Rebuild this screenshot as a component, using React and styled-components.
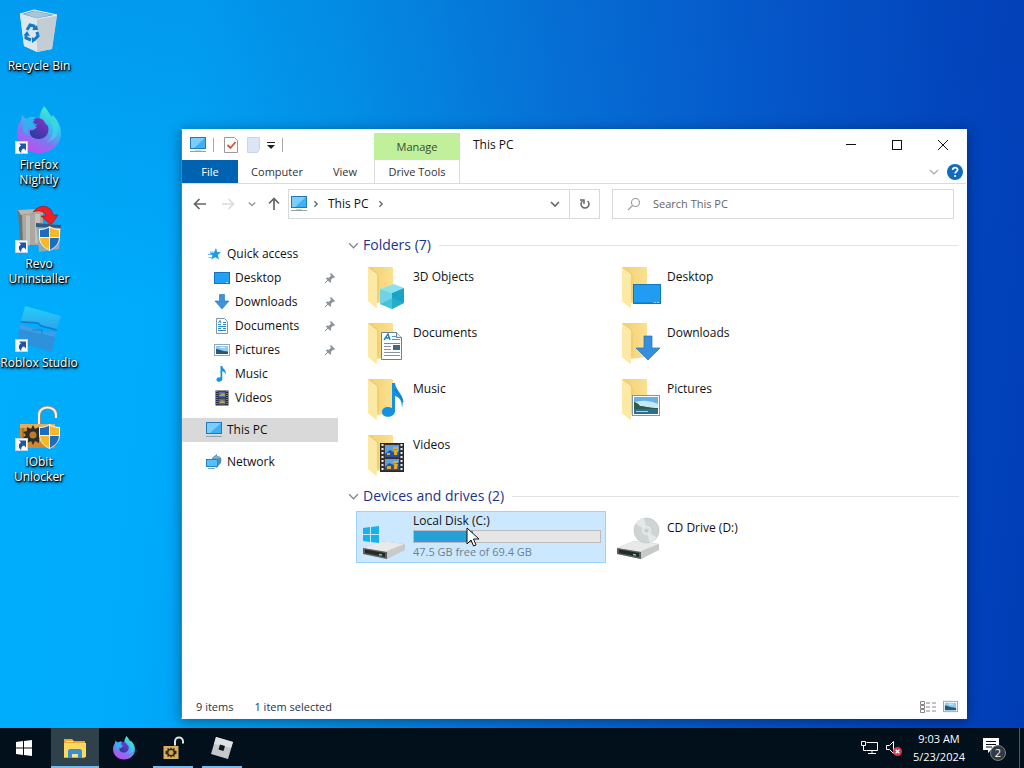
// Third party libraries
import React from 'react';
import styled, { createGlobalStyle } from 'styled-components';

const GlobalStyle = createGlobalStyle`
  * {
    box-sizing: border-box;
  }

  body {
    margin: 0;
    font-family: 'Open Sans', 'Noto Sans', sans-serif;
    font-size: 12px;
    line-height: 16px;
    color: #111;
  }

  button,
  input {
    margin: 0;
    padding: 0;
    border: 0;
    background: none;
    color: inherit;
    font: inherit;
  }

  a {
    color: inherit;
    text-decoration: none;
  }

  svg {
    display: block;
    flex: none;
  }
`;

// Desktop

const Screen = styled.div`
  display: flex;
  flex-direction: column;
  height: 100vh;
  min-height: 680px;
  overflow: hidden;
  background:
    linear-gradient(180deg, rgba(10, 60, 170, 0.16) 0%, rgba(10, 60, 170, 0) 40%),
    linear-gradient(96deg, #00aefd 0%, #00abfb 18%, #0298ec 32%, #0676db 51%, #0458cc 72%, #0143bc 90%, #003db5 100%);
`;

const Desktop = styled.main`
  position: relative;
  flex: 1;
`;

const ShortcutList = styled.div`
  display: grid;
  grid-auto-rows: 99px;
  width: 78px;
  padding-top: 7px;
`;

const Shortcut = styled.a`
  display: flex;
  flex-direction: column;
  align-items: center;
  gap: 3px;
  color: #fff;
  line-height: 15px;
  text-align: center;
  text-shadow: 1px 1px 1px #000, 0 1px 2px #000, 1px 2px 3px rgba(0, 0, 0, 0.7);
`;

const ShortcutLabel = styled.span`
  width: ${props => props.$narrow ? '62px' : 'auto'};
  white-space: ${props => props.$narrow ? 'normal' : 'nowrap'};
`;

// Explorer window

const Window = styled.section`
  position: absolute;
  inset: 129px 57px 9px 181px;
  display: flex;
  flex-direction: column;
  border: 1px solid;
  border-color: #f4faff #f4faff #f4faff #1e8fd4;
  background: #fff;
  box-shadow: 0 2px 12px rgba(0, 0, 0, 0.4);
`;

const TitleBar = styled.header`
  display: flex;
  height: 30px;
`;

const QuickTools = styled.div`
  display: flex;
  align-items: center;
  width: 192px;
  padding-left: 8px;
  gap: 6px;
`;

const Separator = styled.span`
  width: 1px;
  height: 14px;
  margin: 0 3px 0 1px;
  background: #aaa;
`;

const ToolButton = styled.button`
  display: grid;
  place-items: center;
  width: ${props => props.$width || 16}px;
  height: 24px;
`;

const ManageTab = styled.span`
  width: 86px;
  margin-top: 3px;
  background: #c0f09a;
  font-size: 11px;
  line-height: 28px;
  text-align: center;
  color: #3c4a33;
`;

const WindowTitle = styled.h1`
  flex: 1;
  margin: 0;
  padding-left: 13px;
  font-size: 12px;
  font-weight: 400;
  line-height: 30px;
`;

const CaptionButton = styled.button`
  display: grid;
  place-items: center;
  width: 46px;
`;

const Ribbon = styled.nav`
  display: flex;
  height: 24px;
  border-bottom: 1px solid #dadbdc;
  font-size: 11px;
`;

const RibbonTab = styled.button`
  width: ${props => props.$width}px;
  color: #333;
  line-height: 23px;
`;

const FileTab = styled(RibbonTab)`
  background: #0063b1;
  color: #fff;
`;

const ContextTab = styled(RibbonTab)`
  border: 1px solid #dedede;
  border-width: 0 1px;
`;

const RibbonEnd = styled.div`
  display: flex;
  align-items: center;
  gap: 8px;
  margin-left: auto;
  padding-right: 3px;
`;

const AddressRow = styled.div`
  display: flex;
  align-items: center;
  gap: 4px;
  height: 41px;
  padding: 0 12px 2px 6px;
`;

const AddressBox = styled.div`
  display: flex;
  align-items: center;
  flex: 312 1 312px;
  height: 30px;
  margin-right: 8px;
  border: 1px solid #d9d9d9;
`;

const Crumb = styled.button`
  display: flex;
  align-items: center;
  gap: ${props => props.$root ? '5px' : '8px'};
  padding: 0 ${props => props.$root ? '2px' : '6px'};
`;

const RefreshButton = styled.button`
  display: grid;
  place-items: center;
  width: 30px;
  height: 28px;
  border-left: 1px solid #d9d9d9;
`;

const HistoryButton = styled(ToolButton)`
  margin-left: auto;
  margin-right: 6px;
`;

const SearchBox = styled.label`
  display: flex;
  align-items: center;
  gap: 12px;
  flex: 342 1 342px;
  height: 30px;
  padding: 0 14px;
  border: 1px solid #d9d9d9;
  font-size: 11px;
`;

const SearchInput = styled.input`
  flex: 1;
  min-width: 0;
  outline: none;

  &::placeholder {
    color: #666;
    opacity: 1;
  }
`;

const Body = styled.div`
  display: flex;
  flex: 1;
  min-height: 0;
`;

const Sidebar = styled.nav`
  width: 156px;
  padding-top: 17px;
`;

const SideGroup = styled.div`
  margin-bottom: 8px;
`;

const SideLink = styled.a`
  display: flex;
  align-items: center;
  gap: 5px;
  height: 24px;
  padding-left: ${props => props.$nested ? '32px' : '24px'};
  background: ${props => props.$selected ? '#d9d9d9' : 'none'};
`;

const PinSlot = styled.span`
  margin-left: auto;
  padding-right: 2px;
`;

const Content = styled.div`
  flex: 1;
  padding: 9px 7px 0 10px;
`;

const SectionHeader = styled.h2`
  display: flex;
  align-items: center;
  gap: 4px;
  height: 22px;
  margin: 0 0 4px;
  color: #1e3287;
  font-size: 14px;
  font-weight: 400;
  line-height: 22px;

  &::after {
    content: '';
    flex: 1;
    height: 1px;
    margin-left: 4px;
    background: #e2e2e2;
  }
`;

const TileGrid = styled.div`
  display: grid;
  grid-template-columns: repeat(auto-fill, 250px);
  gap: 4px;
  margin: 0 -7px 5px 8px;
`;

const Tile = styled.a`
  display: flex;
  gap: 3px;
  height: 52px;
  padding: 1px 4px 1px 5px;
  border: 1px solid ${props => props.$selected ? '#99d1ff' : 'transparent'};
  background: ${props => props.$selected ? '#cce8ff' : 'none'};
`;

const TileLabel = styled.span`
  padding-top: 7px;
`;

const DriveInfo = styled.span`
  display: flex;
  flex-direction: column;
  flex: 1;
  gap: 1px;
`;

const Meter = styled.span`
  height: 13px;
  border: 1px solid #bcbcbc;
  background: #e6e6e6;
`;

const MeterFill = styled.span`
  display: block;
  height: 11px;
  background: #26a0da;
`;

const FreeSpace = styled.span`
  color: #6d7f8c;
  font-size: 11px;
`;

const StatusBar = styled.footer`
  display: flex;
  align-items: center;
  gap: 21px;
  height: 23px;
  padding: 0 8px 0 14px;
  color: #26334d;
  font-size: 11px;
`;

const ViewModes = styled.div`
  display: flex;
  gap: 6px;
  margin-left: auto;
`;

const Pointer = styled.svg`
  position: absolute;
  left: 466px;
  top: 527px;
`;

// Taskbar

const Taskbar = styled.footer`
  display: flex;
  height: 40px;
  background: #01101a;
  color: #fff;
`;

const TaskButton = styled.button`
  display: grid;
  place-items: center;
  width: 48px;
  margin-right: ${props => props.$start ? '3px' : '1px'};
  background: ${props => props.$active ? '#2f414b' : 'none'};
  box-shadow: ${props => props.$active ? 'inset 0 -2px #76b9ed' : 'none'};
`;

const RunningButton = styled(TaskButton)`
  background: linear-gradient(#76b9ed, #76b9ed) center bottom / 40px 2px no-repeat;
`;

const Tray = styled.div`
  display: flex;
  align-items: center;
  gap: 7px;
  margin-left: auto;
`;

const Clock = styled.time`
  width: 60px;
  font-size: 11px;
  line-height: 18px;
  text-align: center;
  white-space: nowrap;
`;

const NoticeButton = styled.button`
  width: 26px;
  margin-left: 6px;
`;

const ShowDesktop = styled.button`
  width: 5px;
  height: 40px;
  margin-left: 4px;
  border-left: 1px solid #4c5a63;
`;

// Small icons

const MonitorIcon = () => (
  <svg width="16" height="16" viewBox="0 0 16 16">
    <rect x="0.5" y="0.5" width="15" height="11" fill="#3fb0f5" stroke="#2378b8" />
    <path d="M1 1h14L4 11H1z" fill="#7bcdfa" />
    <path d="M0 14.500h16" stroke="#8fa3b1" />
    <path d="M5 13h6v1H5z" fill="#c3d3de" />
  </svg>
);

const StarIcon = () => (
  <svg width="16" height="16" viewBox="0 0 16 16">
    <path d="M10 2l1.200 4 3.800.300-3.200 2.600 1.200 4.600-3.800-2.300-4 2.300 1.300-4.300L3.500 6.800l4.400-.4z" fill="#1f9be8" />
    <path d="M2 8.500h4M2.500 11.500h3M4 6h3" stroke="#64bdf2" />
  </svg>
);

const DesktopIcon = () => (
  <svg width="16" height="16" viewBox="0 0 16 16">
    <rect x="0.5" y="2.500" width="15" height="11" fill="#22a0f5" stroke="#1474c4" />
    <path d="M12 12.500h2" stroke="#a7dcff" />
  </svg>
);

const DownloadIcon = () => (
  <svg width="16" height="16" viewBox="0 0 16 16">
    <path d="M5.500.5h5V7h4.500L8 15 1 7h4.500z" fill="#3c93dc" stroke="#2470b4" strokeWidth="0.6" />
  </svg>
);

const DocumentIcon = () => (
  <svg width="16" height="16" viewBox="0 0 16 16">
    <path d="M2.500.5h8l3 3v12h-11z" fill="#fff" stroke="#8395a3" />
    <path d="M4 6.500h3M9 4.500h3M9 6.500h3M4 8.500h8M4 10.500h3M9 10.500h3M4 12.500h8" stroke="#2e8ccc" />
    <path d="M4.500 5l1.500-2.500L7 5" fill="none" stroke="#2b87c7" />
  </svg>
);

const PictureIcon = ({ size = 16 }) => (
  <svg width={size} height={size} viewBox="0 0 16 16">
    <rect x="0.5" y="2.500" width="15" height="11" fill="#fff" stroke="#9aa6b0" />
    <rect x="2" y="4" width="12" height="8" fill="#8ccdf3" />
    <path d="M2 7c3 0 5 2 12 2.500V12H2z" fill="#27577c" />
    <path d="M6 5.500h5" stroke="#e4f5ff" />
  </svg>
);

const MusicIcon = () => (
  <svg width="16" height="16" viewBox="0 0 16 16">
    <path d="M6.500 0h1.800c.2 3 4.700 3.800 3.200 8.500-.3-2-1.500-3-3.200-3.300V13c0 3.400-5.800 3.700-5.800.7 0-2 2.300-2.800 4-2.200z" fill="#1592e2" />
  </svg>
);

const VideoIcon = () => (
  <svg width="16" height="16" viewBox="0 0 16 16">
    <rect x="1.500" y="0.500" width="13" height="15" fill="#272833" />
    <path d="M3 1v14M13 1v14" stroke="#c4c8cc" strokeDasharray="1 1" />
    <path d="M4.500 1.500h7v6h-7zM4.500 8.500h7v6h-7z" fill="#4b6ea8" />
    <path d="M5 6l3-3 3 1v2zM5 13l3-3 3 2v1z" fill="#c4a03c" />
  </svg>
);

const NetworkIcon = () => (
  <svg width="16" height="16" viewBox="0 0 16 16">
    <path d="M6 4l5-4v2c4 0 5 2 4 7l-5 5z" fill="#4c8fb8" />
    <path d="M8 4c3-2 5-1 6 0M10 13c2-2 2-5 1-9" stroke="#a6d5e8" fill="none" />
    <rect x="0.500" y="5.500" width="11" height="7" fill="#55bff7" stroke="#2784bd" />
    <path d="M2 14.500h7" stroke="#7aa8c4" />
  </svg>
);

const PinIcon = () => (
  <svg width="12" height="12" viewBox="0 0 12 12">
    <path d="M7 1l4 4-1 1-1-.3-2 2 .2 2.100-1 1L1.900 6.500l1-1 2.100.3 2-2L6 2z" fill="#8b949b" />
    <path d="M4 8l-3 3" stroke="#8b949b" />
  </svg>
);

const Chevron = ({ size = 10, color = '#666', right, width = 1.2 }) => (
  <svg width={size} height={size} viewBox="0 0 10 10" fill="none" stroke={color} strokeWidth={width}>
    <path d={right ? 'M3 1.500L6.500 5 3 8.500' : 'M1 3l4 4 4-4'} />
  </svg>
);

const ArrowIcon = ({ turn = 0, color = '#666' }) => (
  <svg width="14" height="14" viewBox="0 0 14 14" fill="none" stroke={color} strokeWidth="1.700">
    <path d="M13 7H1.500M6.500 2l-5 5 5 5" transform={`rotate(${turn} 7 7)`} />
  </svg>
);

// Folder and drive icons

const Folder = ({ children }) => (
  <svg width="48" height="48" viewBox="0 0 48 48">
    <defs>
      <linearGradient id="folder-back" x1="0" y1="0" x2="1" y2="0">
        <stop offset="0" stopColor="#f3cf70" />
        <stop offset="1" stopColor="#fbe08f" />
      </linearGradient>
    </defs>
    <path d="M6 5h24c1 0 1 1 1 1v33l-17 2z" fill="url(#folder-back)" />
    <path d="M6 5l8 6c1 1 1 2 1 3v31c0 1-1 1-2 0l-7-6z" fill="#fce9a6" />
    <path d="M7 5.500l8 6c1 1 1 2 1 3V38" stroke="#ecc765" fill="none" />
    {children}
  </svg>
);

const FolderCube = () => (
  <Folder>
    <path d="M18 27l14-5 10 4-12 5z" fill="#8be2ef" />
    <path d="M18 27l12 4v16l-12-5z" fill="#6fd5e6" />
    <path d="M30 31l12-5v15l-12 6z" fill="#1aa3c6" />
    <path d="M18 42l13-6 11 5-12 6z" fill="#2bb5d1" opacity="0.6" />
  </Folder>
);

const FolderDesktop = () => (
  <Folder>
    <rect x="17.500" y="22.500" width="27" height="19" fill="#209cf3" stroke="#1575bd" />
    <path d="M19 40.500h18" stroke="#1688da" />
    <path d="M38 40.500h5" stroke="#8dd0ff" strokeDasharray="2 1" />
  </Folder>
);

const FolderDocument = () => (
  <Folder>
    <path d="M19.500 14.500h15l5 5v22h-20z" fill="#fff" stroke="#6f7f8b" />
    <path d="M34.500 14.500v5h5" fill="#e6edf2" stroke="#6f7f8b" />
    <path d="M22 22l4-6 2 6M24 20h4" stroke="#2282bd" fill="none" strokeWidth="1.400" />
    <path d="M30 18.500h4M30 21.500h8M22 25.500h16" stroke="#3e9dca" />
    <path d="M22 28.500h7M22 31.500h7M22 34.500h16M22 37.500h16" stroke="#8594a0" />
    <path d="M31 27h7v5h-7z" fill="#4a6478" />
  </Folder>
);

const FolderDownload = () => (
  <Folder>
    <path d="M28 18h8v12h8L32 42 20 30h8z" fill="#3490dc" stroke="#2573b5" strokeWidth="0.700" />
  </Folder>
);

const FolderMusic = () => (
  <Folder>
    <path d="M30 9h3c1 9 11 11 7 25 0-8-3-11-7-12v15c0 7-13 8-13 1 0-5 6-6 10-4z" fill="#1292e1" />
    <path d="M33 15c1 5 8 8 8 13" stroke="#0a6fb7" fill="none" />
  </Folder>
);

const FolderPicture = () => (
  <Folder>
    <rect x="16.500" y="21.500" width="27" height="20" fill="#fff" stroke="#8894a0" />
    <rect x="18" y="23" width="24" height="17" fill="#65b1e8" />
    <path d="M18 29c5-3 15-3 24 1v4H18z" fill="#c8e8f8" />
    <path d="M18 28c3 1 4 1 6 4 5 0 9 2 18 2v1H18z" fill="#315f46" />
    <path d="M18 35h24v5H18z" fill="#2a6d9c" />
    <path d="M20 37.500h12" stroke="#a7d2e8" />
  </Folder>
);

const FolderVideo = () => (
  <Folder>
    <rect x="18.500" y="13.500" width="23" height="28" fill="#3a3230" stroke="#2c2626" />
    <path d="M20.500 14v27M39.500 14v27" stroke="#eceff1" strokeWidth="2" strokeDasharray="2 2" />
    <path d="M23 15h14v12H23zM23 29h14v11H23z" fill="#5f9fdd" />
    <path d="M23 24l5-4 5 3 4-2v6H23zM23 37l4-4 5 2 5-3v8H23z" fill="#2553a0" />
    <path d="M31 17h5v2h-5zM32 20h4l-1 5h-3zM31 31h5v2h-5zM32 34h4l-1 5h-3zM25 36h4v3h-4zM25 23h3v2h-3z" fill="#e3aa26" />
  </Folder>
);

const DriveBody = () => (
  <g>
    <path d="M1 35l17-7 25 3v5l-18 10L1 41z" fill="#b6b9bb" />
    <path d="M1 35l17-7 25 3-18 8z" fill="#e9e9e8" />
    <path d="M25 38l18-7v6l-18 9z" fill="#c8caca" />
    <path d="M1 35l24 4v7L1 41z" fill="#5c5f5f" />
    <path d="M3 36.500l20 3.500v4L3 40z" fill="#242828" />
    <path d="M17 41.500l3 .5" stroke="#75d68a" strokeWidth="1.500" />
  </g>
);

const LocalDiskIcon = () => (
  <svg width="48" height="48" viewBox="0 0 48 48">
    <DriveBody />
    <path d="M1 15l7-1v7H1zM9 14l8-1v8H9zM1 22h7v7l-7-1zM9 22h8v8l-8-1z" fill="#17b1ee" />
  </svg>
);

const CdDriveIcon = () => (
  <svg width="48" height="48" viewBox="0 0 48 48">
    <DriveBody />
    <circle cx="30.500" cy="17.500" r="12.500" fill="#cfd5d5" stroke="#bcc4c4" strokeWidth="0.700" />
    <path d="M30.500 17.500L20 11a12 12 0 0 1 8-6zM30.500 17.500l10 7a12 12 0 0 1-7 5z" fill="#e3e9e8" />
    <circle cx="30.500" cy="17.500" r="4" fill="#d9dede" stroke="#eef1f1" />
    <circle cx="30.500" cy="17.500" r="1.500" fill="#c1c8c8" />
  </svg>
);

// Desktop and taskbar app icons

const ShortcutArrow = () => (
  <g>
    <rect x="0.500" y="35.500" width="12" height="12" fill="#fff" stroke="#c7d6e4" />
    <path d="M4 37.500h7v7l-2-2c-2 .5-3 2-2.800 4.500-3-2-3.200-6-.2-7.500z" fill="#1d56a4" />
  </g>
);

const Shield = () => (
  <g>
    <path d="M24 24c5 0 8-1 10.500-3 3 2 6 3 10.500 3v8c0 7-5 11-10.500 14C29 43 24 39 24 32z" fill="#f5f5f0" />
    <path d="M25 25c4 0 6.500-1 9-2.500V32h-9zM35 33h9c-.5 6-4 9-9 12z" fill="#1b6cc2" />
    <path d="M35 22.500c3 1.500 5 2.500 9 2.500v7h-9zM25 33h9v12c-5-3-8.500-6-9-12z" fill="#f7b92b" />
  </g>
);

const RecycleBinIcon = () => (
  <svg width="48" height="48" viewBox="0 0 48 48">
    <path d="M5 7l12 5 25-4-5 34-15 3-13-6z" fill="#cbd9e3" />
    <path d="M5 7l17 5v33L9 39z" fill="#dce7ee" />
    <path d="M22 12l20-4-5 34-15 3z" fill="#c3cdd4" />
    <path d="M5 7l14-4 23 5-20 4z" fill="#81a6bf" stroke="#e7f0f5" />
    <path d="M10 7l10-3 15 4-13 3z" fill="#a9c6d8" />
    <path d="M12 23l3-5 4 1 1 4M22 25l1 4-4 4M16 33l-5-2 0-4" stroke="#1479c8" strokeWidth="3" fill="none" />
    <path d="M17 23h6l-1-5zM17 30v6l4-3zM9 28l3-4 3 5z" fill="#1479c8" />
  </svg>
);

const FirefoxArt = ({ size = 48, id, children }) => (
  <svg width={size} height={size} viewBox="0 0 48 48">
    <defs>
      <linearGradient id={`${id}-flame`} x1="0.850" y1="0" x2="0.350" y2="1">
        <stop offset="0" stopColor="#4df5bd" />
        <stop offset="0.400" stopColor="#2fc4ee" />
        <stop offset="0.700" stopColor="#8474f0" />
        <stop offset="1" stopColor="#c04df0" />
      </linearGradient>
      <linearGradient id={`${id}-globe`} x1="0.800" y1="0" x2="0.200" y2="1">
        <stop offset="0" stopColor="#8730c8" />
        <stop offset="1" stopColor="#273c9e" />
      </linearGradient>
    </defs>
    <path d="M29 0c4 4 5 8 8 11l1-2c5 6 8 11 8 18 0 12-10 20-22 20S2 38 2 26C2 21 4 17 6 14l1-5 4 4c3-2 5-2 8-2l5 3c1-6 2-10 5-14z" fill={`url(#${id}-flame)`} />
    <path d="M18 13c6-2 11 0 12 4l3 3c2 8-3 13-9 13-7 0-10-4-9-9 3 1 5-1 7-3-4 0-5-4-4-8z" fill={`url(#${id}-globe)`} />
    <path d="M11 13c4-2 7-1 9 1-3 2-1 4 2 4-1 4-5 3-7 4-3 2-3 5-1 8-6-2-9-8-3-17z" fill="#2bb5f2" opacity="0.800" />
    <path d="M35 14c5 7 4 17-3 22 9-2 13-9 10-18z" fill="#45dbe8" opacity="0.550" />
    {children}
  </svg>
);

const RevoIcon = () => (
  <svg width="48" height="48" viewBox="0 0 48 48">
    <path d="M3 5l21-1 4 3v31l-20 4-3-5z" fill="#73716c" />
    <path d="M7 10l21-3v33H8z" fill="#aaa8a2" />
    <path d="M11 10l4 1v29l-4 2zM20 9h5v29h-5z" fill="#c3c1bb" />
    <path d="M3 5l21-1 4 3-22 3z" fill="#bab7b0" />
    <path d="M18 7C24-1 36-1 38 10h5l-7 10-10-9 5 0c-1-5-7-6-13-4z" fill="#ed2029" stroke="#b31018" strokeWidth="0.700" />
    <path d="M21 18l25 2-2 24-20 3z" fill="#8fa9b7" />
    <path d="M21 18l25 2v3l-25-1z" fill="#315a82" />
    <Shield />
    <ShortcutArrow />
  </svg>
);

const StudioIcon = () => (
  <svg width="48" height="48" viewBox="0 0 48 48">
    <defs>
      <linearGradient id="studio-top" x1="0" y1="0" x2="0" y2="1">
        <stop offset="0" stopColor="#27cdfb" />
        <stop offset="1" stopColor="#2aa6ec" />
      </linearGradient>
    </defs>
    <path d="M10 2l36 10-4 13-16-4-3-3-17-1z" fill="url(#studio-top)" />
    <path d="M5 20l17 5 3 2 16 1-4 20L2 38z" fill="#2e91dc" />
    <path d="M5 20l17 5 3 2 16 1-1 5L4 25z" fill="#3f9fe4" />
    <path d="M6 18l17 1 3 3 16 4" stroke="#1879c4" fill="none" strokeWidth="1.500" />
    <path d="M17 26h10v4" stroke="#1f7fc9" fill="none" />
    <ShortcutArrow />
  </svg>
);

const Padlock = () => (
  <g>
    <path d="M24 21V12c0-10 17-10 17 0v3" stroke="#8a8984" strokeWidth="4" fill="none" />
    <path d="M24 21V12c0-10 17-10 17 0v3" stroke="#f1f0eb" strokeWidth="2" fill="none" />
    <path d="M5 21h35v24H5z" fill="#c98a33" />
    <path d="M5 21h35v4H5z" fill="#e2ae5c" />
    <path d="M8 25v20" stroke="#995e1d" />
    <path d="M18 22l2 4 4-2v4l4 1-3 3 3 3-4 1v4l-4-2-2 4-2-4-4 2v-4l-4-1 3-3-3-3 4-1v-4l4 2z" fill="#302c26" />
    <circle cx="18" cy="32" r="3.500" fill="#b87e2f" />
  </g>
);

const UnlockerIcon = () => (
  <svg width="48" height="48" viewBox="0 0 48 48">
    <Padlock />
    <Shield />
    <ShortcutArrow />
  </svg>
);

const shortcuts = [
  { name: 'Recycle Bin', icon: <RecycleBinIcon /> },
  { name: 'Firefox Nightly', icon: <FirefoxArt id="desk"><ShortcutArrow /></FirefoxArt>, narrow: true },
  { name: 'Revo Uninstaller', icon: <RevoIcon />, narrow: true },
  { name: 'Roblox Studio', icon: <StudioIcon /> },
  { name: 'IObit Unlocker', icon: <UnlockerIcon />, narrow: true },
];

const sideGroups = [
  [
    { name: 'Quick access', icon: <StarIcon /> },
    { name: 'Desktop', icon: <DesktopIcon />, nested: true, pinned: true },
    { name: 'Downloads', icon: <DownloadIcon />, nested: true, pinned: true },
    { name: 'Documents', icon: <DocumentIcon />, nested: true, pinned: true },
    { name: 'Pictures', icon: <PictureIcon />, nested: true, pinned: true },
    { name: 'Music', icon: <MusicIcon />, nested: true },
    { name: 'Videos', icon: <VideoIcon />, nested: true },
  ],
  [{ name: 'This PC', icon: <MonitorIcon />, selected: true }],
  [{ name: 'Network', icon: <NetworkIcon /> }],
];

const folders = [
  { name: '3D Objects', icon: <FolderCube /> },
  { name: 'Desktop', icon: <FolderDesktop /> },
  { name: 'Documents', icon: <FolderDocument /> },
  { name: 'Downloads', icon: <FolderDownload /> },
  { name: 'Music', icon: <FolderMusic /> },
  { name: 'Pictures', icon: <FolderPicture /> },
  { name: 'Videos', icon: <FolderVideo /> },
];

const disk = { free: 47.5, total: 69.4 };

const ExplorerTitle = () => (
  <TitleBar>
    <QuickTools>
      <MonitorIcon />
      <Separator />
      <ToolButton aria-label="Properties">
        <svg width="14" height="16" viewBox="0 0 14 16">
          <path d="M.5.500h10l3 3v12H.5z" fill="#fff" stroke="#9a9a9a" />
          <path d="M3.500 8l3 3 5-6" fill="none" stroke="#d9502f" strokeWidth="1.800" />
        </svg>
      </ToolButton>
      <ToolButton aria-label="New folder">
        <svg width="13" height="16" viewBox="0 0 13 16">
          <path d="M.5.500h12v12l-2 3H.5z" fill="#dce5f4" stroke="#cbd4e2" />
        </svg>
      </ToolButton>
      <ToolButton $width={8} aria-label="Customize toolbar">
        <svg width="8" height="8" viewBox="0 0 8 8">
          <path d="M0 1h8v1H0zM0 4h8L4 8z" fill="#222" />
        </svg>
      </ToolButton>
      <Separator />
    </QuickTools>
    <ManageTab>Manage</ManageTab>
    <WindowTitle>This PC</WindowTitle>
    <CaptionButton aria-label="Minimize">
      <svg width="10" height="10"><path d="M0 4.500h10" stroke="#111" /></svg>
    </CaptionButton>
    <CaptionButton aria-label="Maximize">
      <svg width="10" height="10"><rect x="0.500" y="0.500" width="9" height="9" fill="none" stroke="#111" /></svg>
    </CaptionButton>
    <CaptionButton aria-label="Close">
      <svg width="10" height="10"><path d="M0 0l10 10M10 0L0 10" stroke="#111" /></svg>
    </CaptionButton>
  </TitleBar>
);

const ExplorerRibbon = () => (
  <Ribbon>
    <FileTab $width={56}>File</FileTab>
    <RibbonTab $width={78}>Computer</RibbonTab>
    <RibbonTab $width={58}>View</RibbonTab>
    <ContextTab $width={86}>Drive Tools</ContextTab>
    <RibbonEnd>
      <ToolButton $width={10} aria-label="Expand ribbon">
        <Chevron color="#aaa" />
      </ToolButton>
      <ToolButton aria-label="Help">
        <svg width="16" height="16" viewBox="0 0 16 16">
          <circle cx="8" cy="8" r="8" fill="#0f6cbd" />
          <path d="M5.600 6c0-3.200 5-3 5-.2 0 1.800-2.500 1.900-2.500 3.700" fill="none" stroke="#fff" strokeWidth="1.700" />
          <circle cx="8.100" cy="12" r="1.100" fill="#fff" />
        </svg>
      </ToolButton>
    </RibbonEnd>
  </Ribbon>
);

const ExplorerAddress = () => (
  <AddressRow>
    <ToolButton $width={24} aria-label="Back"><ArrowIcon /></ToolButton>
    <ToolButton $width={24} aria-label="Forward"><ArrowIcon turn={180} color="#dcdcdc" /></ToolButton>
    <ToolButton aria-label="Recent locations"><Chevron size={8} color="#999" width={1.8} /></ToolButton>
    <ToolButton $width={20} aria-label="Up"><ArrowIcon turn={90} /></ToolButton>
    <AddressBox>
      <Crumb $root aria-label="Root"><MonitorIcon /><Chevron size={8} right width={1.6} /></Crumb>
      <Crumb>This PC <Chevron size={8} right width={1.6} /></Crumb>
      <HistoryButton aria-label="Previous locations"><Chevron width={1.6} /></HistoryButton>
      <RefreshButton aria-label="Refresh">
        <svg width="12" height="12" viewBox="0 0 12 12" fill="none" stroke="#666" strokeWidth="1.500">
          <path d="M8.500 3a4 4 0 1 1-5 0" />
          <path d="M1 2h4v4" />
        </svg>
      </RefreshButton>
    </AddressBox>
    <SearchBox>
      <svg width="14" height="14" viewBox="0 0 14 14" fill="none" stroke="#999" strokeWidth="1.100">
        <circle cx="8.500" cy="5.500" r="4" />
        <path d="M5.500 8.500L1 13" />
      </svg>
      <SearchInput type="search" aria-label="Search This PC" placeholder="Search This PC" />
    </SearchBox>
  </AddressRow>
);

const ExplorerSidebar = () => (
  <Sidebar>
    {sideGroups.map(group => (
      <SideGroup key={group[0].name}>
        {group.map(item => (
          <SideLink key={item.name} href="#" $nested={item.nested} $selected={item.selected}>
            {item.icon}
            {item.name}
            {item.pinned && <PinSlot><PinIcon /></PinSlot>}
          </SideLink>
        ))}
      </SideGroup>
    ))}
  </Sidebar>
);

const ExplorerContent = () => {
  const used = (1 - disk.free / disk.total) * 100;

  return (
    <Content>
      <SectionHeader><Chevron size={11} color="#888" />Folders (7)</SectionHeader>
      <TileGrid>
        {folders.map(folder => (
          <Tile key={folder.name} href="#">
            {folder.icon}
            <TileLabel>{folder.name}</TileLabel>
          </Tile>
        ))}
      </TileGrid>
      <SectionHeader><Chevron size={11} color="#888" />Devices and drives (2)</SectionHeader>
      <TileGrid>
        <Tile href="#" $selected>
          <LocalDiskIcon />
          <DriveInfo>
            <span>Local Disk (C:)</span>
            <Meter><MeterFill style={{ width: `${used}%` }} /></Meter>
            <FreeSpace>{disk.free} GB free of {disk.total} GB</FreeSpace>
          </DriveInfo>
        </Tile>
        <Tile href="#">
          <CdDriveIcon />
          <TileLabel>CD Drive (D:)</TileLabel>
        </Tile>
      </TileGrid>
    </Content>
  );
};

const Explorer = () => (
  <Window>
    <ExplorerTitle />
    <ExplorerRibbon />
    <ExplorerAddress />
    <Body>
      <ExplorerSidebar />
      <ExplorerContent />
    </Body>
    <StatusBar>
      <span>9 items</span>
      <span>1 item selected</span>
      <ViewModes>
        <ToolButton aria-label="Details view">
          <svg width="16" height="12" viewBox="0 0 16 12" fill="none" stroke="#888">
            <path d="M.5.500h4v3h-4zM.5 4.500h4v3h-4zM.5 8.500h4v3h-4z" />
            <path d="M6 2h10M6 6h10M6 10h10" strokeDasharray="4 2" />
          </svg>
        </ToolButton>
        <ToolButton aria-label="Tiles view"><PictureIcon size={15} /></ToolButton>
      </ViewModes>
    </StatusBar>
  </Window>
);

const TaskbarRow = () => (
  <Taskbar>
    <TaskButton $start aria-label="Start">
      <svg width="16" height="16" viewBox="0 0 16 16">
        <path d="M0 2l7-1v6.500H0zM8 1l8-1v7.500H8zM0 8.500h7V15l-7-1zM8 8.500h8V16l-8-1z" fill="#fff" />
      </svg>
    </TaskButton>
    <TaskButton $active aria-label="File Explorer">
      <svg width="24" height="24" viewBox="0 0 24 24">
        <path d="M1 3h8l2 2h11v17H1z" fill="#eba92c" />
        <path d="M3 5h7v1H3z" fill="#fff1b3" />
        <path d="M1 7h22v14H1z" fill="#ffd862" />
        <path d="M5 22v-7c0-1 1-2 2-2h10c1 0 2 1 2 2v7h-4v-4H9v4z" fill="#3a8fd2" />
        <path d="M9 18h6v3H9z" fill="#ffe080" />
      </svg>
    </TaskButton>
    <TaskButton aria-label="Firefox Nightly"><FirefoxArt id="task" size={24} /></TaskButton>
    <RunningButton aria-label="IObit Unlocker">
      <svg width="24" height="24" viewBox="0 0 48 48">
        <path d="M28 19V11c0-11 16-11 16 0v4" fill="none" stroke="#e3e3df" strokeWidth="4" />
        <path d="M5 20h30v26H5z" fill="#d9ae5c" />
        <path d="M20 22l2 4 5-2v5l4 1v6l-4 1v5l-5-2-2 4-2-4-5 2v-5l-4-1v-6l4-1v-5l5 2z" fill="#2c261c" />
        <circle cx="20" cy="33" r="5" fill="#d3a24c" />
      </svg>
    </RunningButton>
    <RunningButton aria-label="Roblox">
      <svg width="22" height="22" viewBox="0 0 22 22">
        <path d="M5 0l17 5-5 17L0 17z" fill="#c4c8cd" />
        <path d="M5 0l17 5-2 6L3 7z" fill="#dfe2e5" />
        <path d="M9 7.500l5 1.500-1.500 5-5-1.500z" fill="#10181e" />
      </svg>
    </RunningButton>
    <Tray>
      <svg width="18" height="16" viewBox="0 0 18 16" fill="none" stroke="#fff">
        <path d="M5.500 2.500h11v8h-11M.5 1.500h4v4h-4zM2.500 5.500v5h3M11 10.500v3M7 13.500h8" />
      </svg>
      <svg width="16" height="16" viewBox="0 0 16 16">
        <path d="M.5 5.500h3l4-4v12l-4-4h-3z" fill="none" stroke="#fff" />
        <circle cx="11.500" cy="11.500" r="4.500" fill="#dc3545" />
        <path d="M9.700 9.700l3.600 3.600M13.300 9.700l-3.600 3.600" stroke="#fff" strokeWidth="1.300" />
      </svg>
      <Clock>9:03 AM<br />5/23/2024</Clock>
      <NoticeButton aria-label="2 new notifications">
        <svg width="26" height="26" viewBox="0 0 26 26">
          <path d="M1 3h16v12H9l-3 3v-3H1z" fill="#fff" />
          <path d="M4 6.500h10M4 9.500h10M4 12h6" stroke="#01101a" />
          <circle cx="16" cy="18" r="7.500" fill="#303a42" stroke="#77818a" />
          <text x="16" y="22" fill="#fff" fontSize="11" textAnchor="middle">2</text>
        </svg>
      </NoticeButton>
      <ShowDesktop aria-label="Show desktop" />
    </Tray>
  </Taskbar>
);

const App = () => (
  <>
    <GlobalStyle />
    <Screen>
      <Desktop>
        <ShortcutList>
          {shortcuts.map(item => (
            <Shortcut key={item.name} href="#">
              {item.icon}
              <ShortcutLabel $narrow={item.narrow}>{item.name}</ShortcutLabel>
            </Shortcut>
          ))}
        </ShortcutList>
        <Explorer />
        <Pointer width="14" height="21" viewBox="0 0 14 21">
          <path d="M1 1v16l4-4 2.500 6 2.500-1-2.500-6H13z" fill="#fff" stroke="#111" />
        </Pointer>
      </Desktop>
      <TaskbarRow />
    </Screen>
  </>
);

export default App;
